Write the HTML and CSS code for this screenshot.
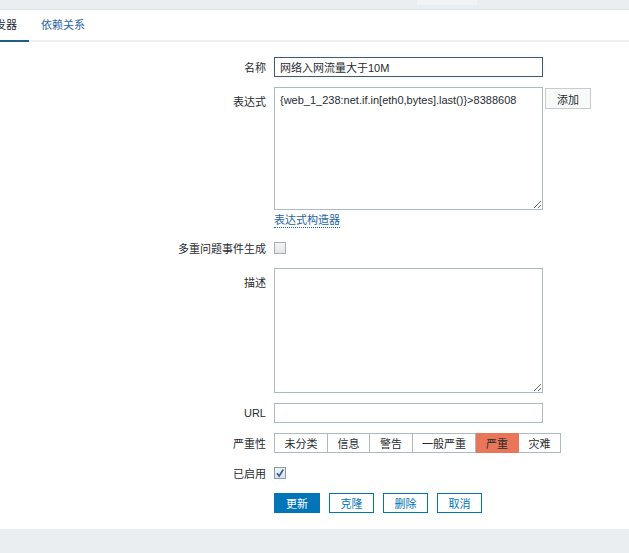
FILE: index.html
```html
<!DOCTYPE html>
<html lang="zh">
<head>
<meta charset="utf-8">
<title>触发器</title>
<link rel="stylesheet" href="styles.css">
</head>
<body>
<div class="topband"><span class="topmark"></span></div>
<div class="tabs">
  <span class="tab active">触发器</span>
  <span class="tab">依赖关系</span>
</div>
<form class="form">
  <label class="lbl">名称</label>
  <div class="cell"><input class="inp focus" type="text" value="网络入网流量大于10M"></div>

  <label class="lbl top">表达式</label>
  <div class="cell col">
    <div class="exprrow">
      <textarea class="ta expr" wrap="off">{web_1_238:net.if.in[eth0,bytes].last()}&gt;8388608</textarea>
      <button type="button" class="addbtn">添加</button>
    </div>
    <a class="link">表达式构造器</a>
  </div>

  <label class="lbl">多重问题事件生成</label>
  <div class="cell"><span class="chk"></span></div>

  <label class="lbl top">描述</label>
  <div class="cell"><textarea class="ta desc"></textarea></div>

  <label class="lbl">URL</label>
  <div class="cell"><input class="inp" type="text" value=""></div>

  <label class="lbl">严重性</label>
  <div class="cell">
    <div class="seg">
      <span class="s w1">未分类</span><span class="s w2">信息</span><span class="s w3">警告</span><span class="s w4">一般严重</span><span class="s w5 sel">严重</span><span class="s w6">灾难</span>
    </div>
  </div>

  <label class="lbl">已启用</label>
  <div class="cell"><span class="chk on"><svg width="10" height="10" viewBox="0 0 10 10"><path d="M2 5.2 L4.2 8 L8.3 1.5" fill="none" stroke="#2f5f9a" stroke-width="1.6"/></svg></span></div>

  <div></div>
  <div class="cell btns">
    <button type="button" class="btn primary">更新</button>
    <button type="button" class="btn">克隆</button>
    <button type="button" class="btn">删除</button>
    <button type="button" class="btn">取消</button>
  </div>
</form>
<div class="footer"></div>
</body>
</html>
```
FILE: styles.css
```css
html, body {
  margin: 0;
  padding: 0;
  background: #ffffff;
  font-family: Arial, "Liberation Sans", "Noto Sans CJK SC", sans-serif;
  font-size: 11px;
  color: #1f2c33;
  overflow: hidden;
}
.topband {
  height: 9px;
  background: #ebeef0;
  border-bottom: 1px solid #e3e7ea;
  position: relative;
}
.topmark {
  position: absolute;
  left: 417px;
  top: 0;
  width: 60px;
  height: 5px;
  background: #f1f3f4;
}
.tabs {
  height: 30px;
  border-bottom: 2px solid #eef0f2;
  display: flex;
  align-items: stretch;
  white-space: nowrap;
}
.tab {
  padding: 0 12px;
  line-height: 31px;
  color: #1f65a6;
  font-size: 11px;
}
.tab.active {
  margin-left: -28px;
  color: #1f2c33;
  border-bottom: 2px solid #1f5f8a;
  margin-bottom: -2px;
}
.form {
  display: grid;
  grid-template-columns: 266px 1fr;
  column-gap: 8px;
  row-gap: 10px;
  padding-top: 15px;
  padding-bottom: 16px;
}
.lbl {
  text-align: right;
  display: flex;
  align-items: center;
  justify-content: flex-end;
  color: #1f2c33;
}
.lbl.top {
  align-items: flex-start;
  padding-top: 6px;
}
.cell {
  display: flex;
  align-items: center;
  min-height: 20px;
}
.cell.col {
  flex-direction: column;
  align-items: flex-start;
}
.inp {
  box-sizing: border-box;
  width: 269px;
  height: 20px;
  margin: 0;
  padding: 0 5px;
  border: 1px solid #acbbc2;
  font-family: Arial, "Liberation Sans", "Noto Sans CJK SC", sans-serif;
  font-size: 11px;
  color: #1f2c33;
  background: #fff;
  outline: none;
}
.inp.focus {
  border-color: #425b69;
  box-shadow: 0 0 3px rgba(150, 200, 230, 0.25);
}
.exprrow {
  display: flex;
  align-items: flex-start;
  gap: 2px;
}
.ta {
  box-sizing: border-box;
  width: 269px;
  margin: 0;
  padding: 5px 5px;
  border: 1px solid #acbbc2;
  font-family: Arial, "Liberation Sans", "Noto Sans CJK SC", sans-serif;
  font-size: 11px;
  line-height: 14px;
  color: #1f2c33;
  background: #fff;
  resize: both;
  outline: none;
  display: block;
  overflow: hidden;
}
.ta.expr { height: 123px; white-space: pre; }
.ta.desc { height: 125px; }
.addbtn {
  box-sizing: border-box;
  height: 21px;
  width: 46px;
  margin: 1px 0 0;
  padding: 0;
  border: 1px solid #c4ccd0;
  background: #f8f9f9;
  font-family: Arial, "Liberation Sans", "Noto Sans CJK SC", sans-serif;
  font-size: 11px;
  color: #1f2c33;
}
.link {
  color: #1f65a6;
  line-height: 14px;
  margin-top: 3px;
  border-bottom: 1px dotted #1f65a6;
}
.chk {
  box-sizing: border-box;
  width: 12px;
  height: 12px;
  border: 1px solid #a6afb5;
  background: linear-gradient(#f4f4f4, #e2e4e6);
  display: inline-flex;
  align-items: center;
  justify-content: center;
}
.chk.on {
  background: linear-gradient(#f0f3f8, #dde3ec);
  border-color: #8d98a8;
}
.seg {
  display: flex;
  height: 20px;
}
.s {
  box-sizing: border-box;
  height: 20px;
  border: 1px solid #acbbc2;
  border-left: none;
  display: flex;
  align-items: center;
  justify-content: center;
  color: #1f2c33;
  background: #fff;
}
.s.w1 { width: 54px; border-left: 1px solid #acbbc2; }
.s.w2 { width: 42px; }
.s.w3 { width: 43px; }
.s.w4 { width: 63px; }
.s.w5 { width: 43px; }
.s.w6 { width: 42px; }
.s.sel {
  background: #e97659;
  border-color: #e97659;
  color: #1f2c33;
}
.cell.btns {
  gap: 9px;
}
.btn {
  box-sizing: border-box;
  height: 20px;
  width: 45px;
  margin: 0;
  padding: 0;
  border: 1px solid #0275b8;
  background: #fff;
  color: #0275b8;
  font-family: Arial, "Liberation Sans", "Noto Sans CJK SC", sans-serif;
  font-size: 11px;
}
.btn.primary {
  width: 46px;
  background: #0275b8;
  color: #fff;
}
.footer {
  height: 40px;
  background: #ebeef0;
}
```
